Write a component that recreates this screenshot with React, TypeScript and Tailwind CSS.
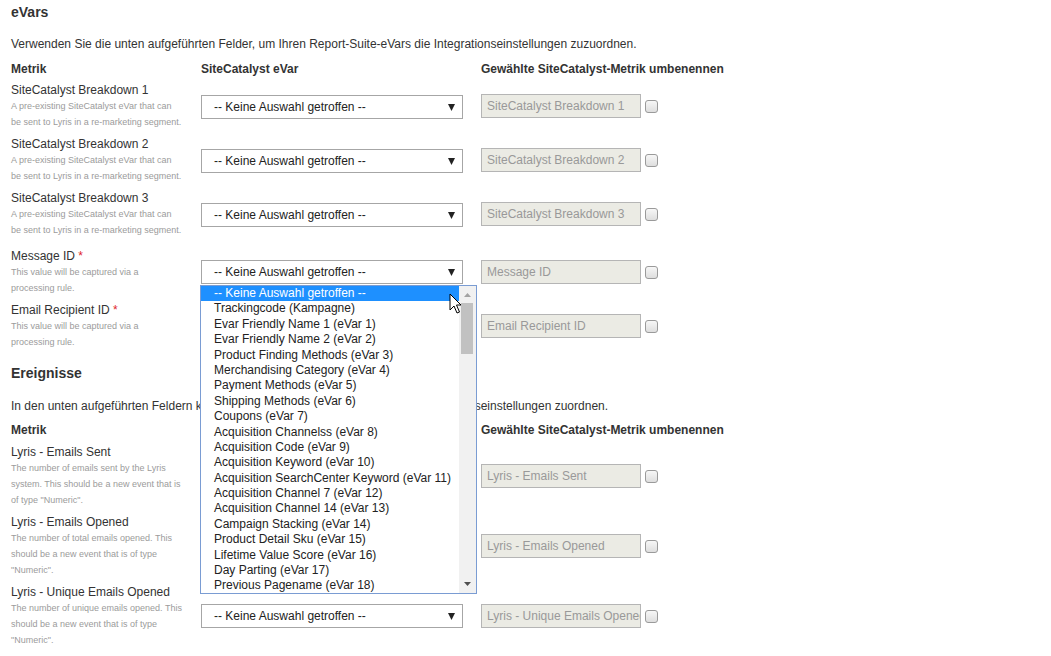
import React from 'react';

const font = "font-['Liberation_Sans',Arial,Helvetica,sans-serif]";

const options = [
  '-- Keine Auswahl getroffen --',
  'Trackingcode (Kampagne)',
  'Evar Friendly Name 1 (eVar 1)',
  'Evar Friendly Name 2 (eVar 2)',
  'Product Finding Methods (eVar 3)',
  'Merchandising Category (eVar 4)',
  'Payment Methods (eVar 5)',
  'Shipping Methods (eVar 6)',
  'Coupons (eVar 7)',
  'Acquisition Channelss (eVar 8)',
  'Acquisition Code (eVar 9)',
  'Acquisition Keyword (eVar 10)',
  'Acquisition SearchCenter Keyword (eVar 11)',
  'Acquisition Channel 7 (eVar 12)',
  'Acquisition Channel 14 (eVar 13)',
  'Campaign Stacking (eVar 14)',
  'Product Detail Sku (eVar 15)',
  'Lifetime Value Score (eVar 16)',
  'Day Parting (eVar 17)',
  'Previous Pagename (eVar 18)',
];

function Caret() {
  return (
    <svg width="7" height="7" viewBox="0 0 7 7" className="shrink-0">
      <path d="M0 0h7L3.5 7z" fill="#222" />
    </svg>
  );
}

function Select({ open = false }: { open?: boolean }) {
  return (
    <div className="relative">
      <div className="flex h-6 w-[262px] items-center justify-between border border-[#a6a6a6] bg-white pl-[12px] pr-[7px] text-[12px] text-[#222]">
        <span>-- Keine Auswahl getroffen --</span>
        <Caret />
      </div>
      {open && <Dropdown />}
    </div>
  );
}

function Dropdown() {
  return (
    <div className="absolute left-[-1px] top-[25px] z-10 flex h-[309px] w-[277px] border border-[#7a9cd3] bg-white">
      <ul className="flex-1 text-[12px] text-[#222]">
        {options.map((o, i) => (
          <li
            key={o}
            className={
              'h-[15.4px] whitespace-nowrap pl-[13px] leading-[15.4px] ' +
              (i === 0 ? 'bg-[#1e90ff] text-white' : '')
            }
          >
            {o}
          </li>
        ))}
      </ul>
      <div className="relative w-[17px] bg-[#f1f1f1]">
        <svg width="7" height="4" viewBox="0 0 7 4" className="absolute left-[5px] top-[7px]">
          <path d="M0 4h7L3.5 0z" fill="#a3a3a3" />
        </svg>
        <div className="absolute left-[2px] top-[17px] h-[51px] w-[12px] bg-[#c1c1c1]" />
        <svg width="7" height="4" viewBox="0 0 7 4" className="absolute bottom-[7px] left-[5px]">
          <path d="M0 0h7L3.5 4z" fill="#505050" />
        </svg>
      </div>
      {/* mouse pointer */}
      <svg width="13" height="21" viewBox="0 0 13 21" className="absolute left-[248px] top-[7px]">
        <path d="M1 1v16l4-4 3 7 2.5-1-3-7H12z" fill="#fff" stroke="#000" strokeWidth="1" strokeLinejoin="round" />
      </svg>
    </div>
  );
}

function RenameField({ value }: { value: string }) {
  return (
    <div className="flex items-center gap-[4px]">
      <div className="flex h-6 w-[160px] items-center overflow-hidden whitespace-nowrap border border-[#b5b5b5] bg-[#ebebe4] pl-[5px] text-[12px] text-[#999]">
        {value}
      </div>
      <div className="h-[13px] w-[13px] rounded-[3px] border border-[#9a9a9a] bg-gradient-to-b from-[#f7f7f7] to-[#dedede]" />
    </div>
  );
}

type Row = {
  label: string;
  required?: boolean;
  desc: string[];
  value: string;
  open?: boolean;
};

const evarRows: Row[] = [
  {
    label: 'SiteCatalyst Breakdown 1',
    desc: ['A pre-existing SiteCatalyst eVar that can', 'be sent to Lyris in a re-marketing segment.'],
    value: 'SiteCatalyst Breakdown 1',
  },
  {
    label: 'SiteCatalyst Breakdown 2',
    desc: ['A pre-existing SiteCatalyst eVar that can', 'be sent to Lyris in a re-marketing segment.'],
    value: 'SiteCatalyst Breakdown 2',
  },
  {
    label: 'SiteCatalyst Breakdown 3',
    desc: ['A pre-existing SiteCatalyst eVar that can', 'be sent to Lyris in a re-marketing segment.'],
    value: 'SiteCatalyst Breakdown 3',
  },
  {
    label: 'Message ID',
    required: true,
    desc: ['This value will be captured via a', 'processing rule.'],
    value: 'Message ID',
    open: true,
  },
  {
    label: 'Email Recipient ID',
    required: true,
    desc: ['This value will be captured via a', 'processing rule.'],
    value: 'Email Recipient ID',
  },
];

const eventRows: Row[] = [
  {
    label: 'Lyris - Emails Sent',
    desc: ['The number of emails sent by the Lyris', 'system. This should be a new event that is', 'of type "Numeric".'],
    value: 'Lyris - Emails Sent',
  },
  {
    label: 'Lyris - Emails Opened',
    desc: ['The number of total emails opened. This', 'should be a new event that is of type', '"Numeric".'],
    value: 'Lyris - Emails Opened',
  },
  {
    label: 'Lyris - Unique Emails Opened',
    desc: ['The number of unique emails opened. This', 'should be a new event that is of type', '"Numeric".'],
    value: 'Lyris - Unique Emails Opened',
  },
];

function FieldRow({ row, offset, className = '' }: { row: Row; offset: string; className?: string }) {
  return (
    <div className={'flex ' + className}>
      <div className="w-[190px]">
        <div className="text-[12px] leading-4 text-[#333]">
          {row.label}
          {row.required && <span className="text-[#e0262b]"> *</span>}
        </div>
        <div className="text-[9px] leading-4 text-[#9b9b9b]">
          {row.desc.map((d) => (
            <div key={d}>{d}</div>
          ))}
        </div>
      </div>
      <div className={'w-[280px] ' + offset}>
        <Select open={row.open} />
      </div>
      <div className={offset === 'pt-[13px]' ? 'pt-[12px]' : offset}>
        <RenameField value={row.value} />
      </div>
    </div>
  );
}

function Headers({ middle }: { middle: string }) {
  return (
    <div className="flex text-[12px] font-bold leading-4 text-[#333]">
      <div className="w-[190px]">Metrik</div>
      <div className="w-[280px]">{middle}</div>
      <div>Gewählte SiteCatalyst-Metrik umbenennen</div>
    </div>
  );
}

export default function App() {
  return (
    <div className={font + ' min-h-[656px] bg-white px-[11px] pt-[4px] text-[#333]'}>
      <h2 className="text-[14px] font-bold leading-4">eVars</h2>
      <p className="mt-4 text-[12px] leading-4">
        Verwenden Sie die unten aufgeführten Felder, um Ihren Report-Suite-eVars die Integrationseinstellungen zuzuordnen.
      </p>
      <div className="mt-[9px]">
        <Headers middle="SiteCatalyst eVar" />
      </div>
      <div className="mt-[5px] flex flex-col gap-[6px]">
        {evarRows.map((r, i) => (
          <FieldRow
            key={r.label}
            row={r}
            offset={i < 3 ? 'pt-[13px]' : 'pt-[12px]'}
            className={i === 3 ? 'mt-[4px]' : ''}
          />
        ))}
      </div>

      <h2 className="mt-[15px] text-[14px] font-bold leading-4">Ereignisse</h2>
      <p className="mt-[17px] text-[12px] leading-4">
        In den unten aufgeführten Feldern können Sie Ihre Report-Suite-Events den Integrationseinstellungen zuordnen.
      </p>
      <div className="mt-[8px]">
        <Headers middle="SiteCatalyst-Ereignis" />
      </div>
      <div className="mt-[6px] flex flex-col gap-[6px]">
        {eventRows.map((r) => (
          <FieldRow key={r.label} row={r} offset="pt-[20px]" />
        ))}
      </div>
    </div>
  );
}
